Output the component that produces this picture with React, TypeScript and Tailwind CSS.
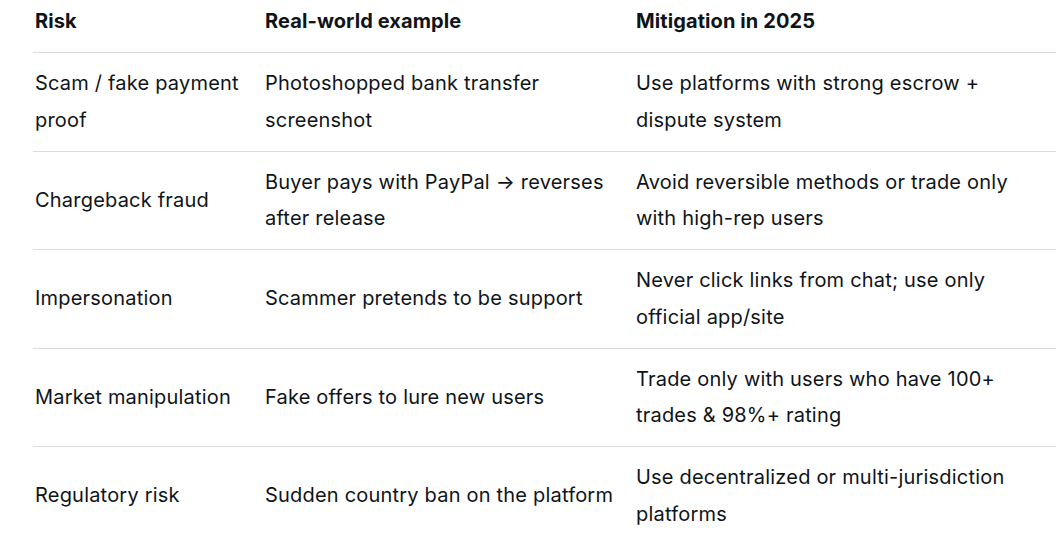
import React from "react";

const rows: [string, string, string][] = [
  ["Scam / fake payment proof", "Photoshopped bank transfer screenshot", "Use platforms with strong escrow + dispute system"],
  ["Chargeback fraud", "Buyer pays with PayPal → reverses after release", "Avoid reversible methods or trade only with high-rep users"],
  ["Impersonation", "Scammer pretends to be support", "Never click links from chat; use only official app/site"],
  ["Market manipulation", "Fake offers to lure new users", "Trade only with users who have 100+ trades & 98%+ rating"],
  ["Regulatory risk", "Sudden country ban on the platform", "Use decentralized or multi-jurisdiction platforms"],
];

const pads = ["pr-[14px]", "pr-[14px]", "pr-[36px]"];

export default function App() {
  return (
    <div
      className="w-[1056px] h-[546px] overflow-hidden bg-white text-[#0f1419] pl-[33px]"
      style={{ fontFamily: "Inter, 'Noto Sans', sans-serif" }}
    >
      <table className="table-fixed border-collapse w-[1023px] text-[20px]">
        <colgroup>
          <col className="w-[230px]" />
          <col className="w-[371px]" />
          <col className="w-[422px]" />
        </colgroup>
        <thead>
          <tr className="border-b border-[#dcdcdc]">
            {["Risk", "Real-world example", "Mitigation in 2025"].map((h, j) => (
              <th
                key={h}
                className={`text-left font-bold leading-[37px] pt-[3px] pb-[12px] pl-[2px] tracking-[0.1px] ${pads[j]}`}
              >
                {h}
              </th>
            ))}
          </tr>
        </thead>
        <tbody>
          {rows.map((r, i) => (
            <tr key={i} className={i < rows.length - 1 ? "border-b border-[#dcdcdc]" : ""}>
              {r.map((c, j) => (
                <td
                  key={j}
                  className={`align-middle leading-[36.75px] py-3 pl-[2px] tracking-[0.2px] ${pads[j]}`}
                >
                  {c}
                </td>
              ))}
            </tr>
          ))}
        </tbody>
      </table>
    </div>
  );
}
